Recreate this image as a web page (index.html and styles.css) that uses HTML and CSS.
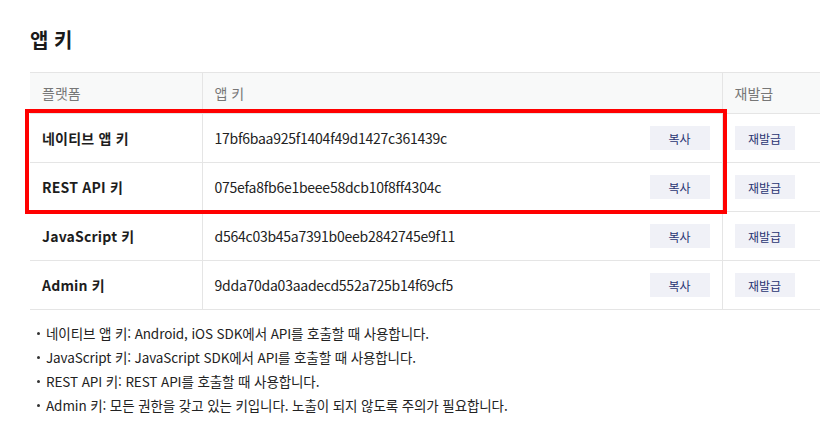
FILE: index.html
```html
<!DOCTYPE html>
<html lang="ko">
<head>
<meta charset="utf-8">
<link rel="stylesheet" href="styles.css">
</head>
<body>
<div class="page">
  <h2 class="title">앱 키</h2>
  <div class="table-wrap">
    <table class="keys">
      <thead>
        <tr><th class="c1">플랫폼</th><th class="c2">앱 키</th><th class="c3">재발급</th></tr>
      </thead>
      <tbody>
        <tr><td class="c1 label">네이티브 앱 키</td><td class="c2"><div class="keycell"><span>17bf6baa925f1404f49d1427c361439c</span><button class="btn">복사</button></div></td><td class="c3"><button class="btn">재발급</button></td></tr>
        <tr><td class="c1 label">REST API 키</td><td class="c2"><div class="keycell"><span>075efa8fb6e1beee58dcb10f8ff4304c</span><button class="btn">복사</button></div></td><td class="c3"><button class="btn">재발급</button></td></tr>
        <tr><td class="c1 label">JavaScript 키</td><td class="c2"><div class="keycell"><span>d564c03b45a7391b0eeb2842745e9f11</span><button class="btn">복사</button></div></td><td class="c3"><button class="btn">재발급</button></td></tr>
        <tr><td class="c1 label">Admin 키</td><td class="c2"><div class="keycell"><span>9dda70da03aadecd552a725b14f69cf5</span><button class="btn">복사</button></div></td><td class="c3"><button class="btn">재발급</button></td></tr>
      </tbody>
    </table>
    <div class="highlight"></div>
  </div>
  <ul class="notes">
    <li>네이티브 앱 키: Android, iOS SDK에서 API를 호출할 때 사용합니다.</li>
    <li>JavaScript 키: JavaScript SDK에서 API를 호출할 때 사용합니다.</li>
    <li>REST API 키: REST API를 호출할 때 사용합니다.</li>
    <li>Admin 키: 모든 권한을 갖고 있는 키입니다. 노출이 되지 않도록 주의가 필요합니다.</li>
  </ul>
</div>
</body>
</html>
```
FILE: styles.css
```css
* { box-sizing: border-box; }
html, body { margin: 0; padding: 0; background: #fff; overflow: hidden; }
body {
  font-family: "Noto Sans CJK KR", "Noto Sans", sans-serif;
  color: #222;
}
.page { padding: 26px 0 0 30px; width: 820px; }
.title {
  margin: 0;
  font-size: 20px;
  font-weight: 700;
  line-height: 28px;
  color: #1a1a1a;
}
.table-wrap { position: relative; margin-top: 18px; }
.keys {
  border-collapse: collapse;
  width: 790px;
  table-layout: fixed;
}
.keys th, .keys td {
  border-top: 1px solid #e5e5e5;
  border-bottom: 1px solid #e5e5e5;
  padding: 0 12px;
  text-align: left;
  font-size: 14px;
}
.keys th {
  height: 41px;
  background: #f8f9f9;
  font-weight: 400;
  color: #777;
}
.keys td { height: 49px; }
.c1 { width: 172px; border-right: 1px solid #e5e5e5; }
.c2 { width: 520px; border-right: 1px solid #e5e5e5; }
.c3 { width: 98px; }
.label { font-weight: 700; color: #1d1d1d; letter-spacing: 0.2px; }
.keycell {
  display: flex;
  align-items: center;
  justify-content: space-between;
}
.keycell span { color: #222; letter-spacing: -0.25px; }
.btn {
  width: 60px;
  height: 24px;
  border: 0;
  border-radius: 0;
  background: #f0f1f7;
  color: #2a3573;
  font-family: inherit;
  font-size: 12px;
  padding: 0;
  cursor: pointer;
}
.highlight {
  position: absolute;
  left: -5px;
  top: 37px;
  width: 702px;
  height: 105px;
  border: 4px solid #ff0000;
  pointer-events: none;
}
.notes {
  list-style: none;
  margin: 11px 0 0 0;
  padding: 0 0 0 7px;
}
.notes li {
  position: relative;
  padding-left: 9px;
  font-size: 13.5px;
  letter-spacing: -0.1px;
  line-height: 24px;
  color: #222;
}
.notes li::before {
  content: "";
  position: absolute;
  left: 0;
  top: 11px;
  width: 3px;
  height: 3px;
  border-radius: 50%;
  background: #333;
}
```
